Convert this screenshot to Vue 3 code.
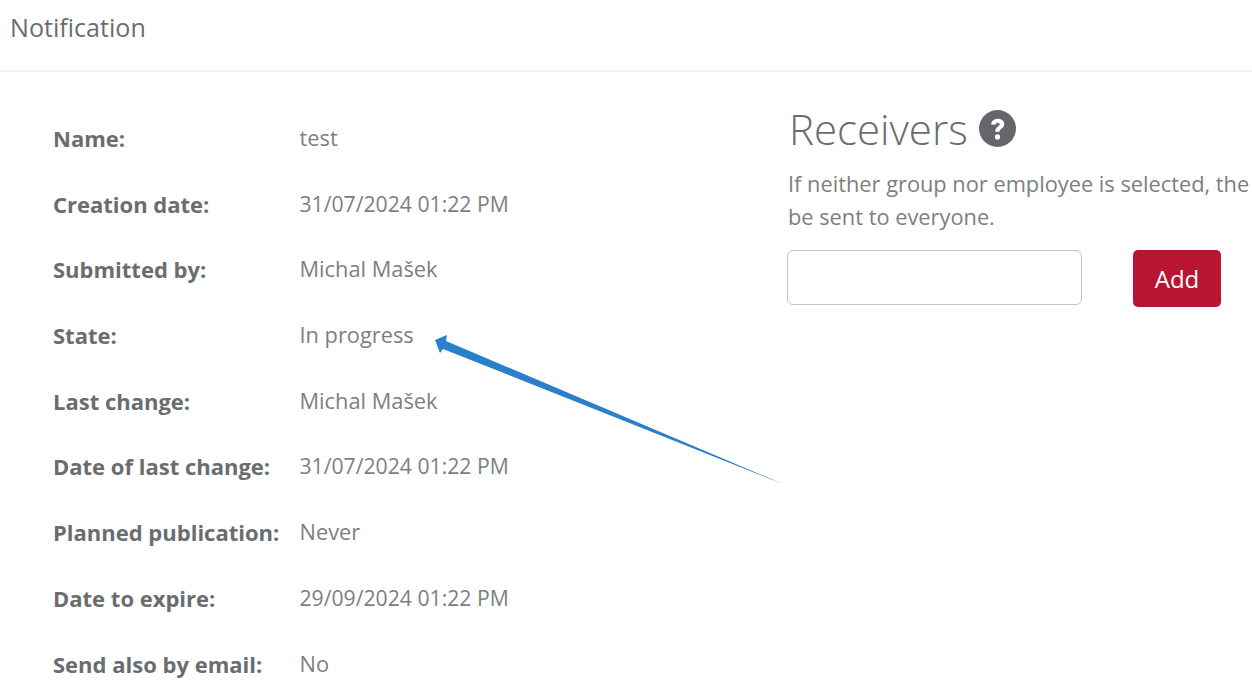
<template>
  <div class="page">
    <header class="page-header">Notification</header>

    <div class="content">
      <dl class="details">
        <div v-for="row in rows" :key="row.label" class="detail-row">
          <dt>{{ row.label }}</dt>
          <dd :class="{ date: row.date }">{{ row.value }}</dd>
        </div>
      </dl>

      <section class="receivers">
        <h2 class="receivers-title">
          Receivers
          <svg class="help-icon" viewBox="0 0 36 36" aria-hidden="true">
            <circle cx="18" cy="18" r="18" fill="#63666a" />
            <path d="M11.800 14.200c.3-3.600 2.900-5.800 6.500-5.800 3.600 0 6.300 2.100 6.300 5.200 0 2.400-1.400 3.600-2.900 4.700-1.200.9-1.700 1.400-1.700 2.900h-4.200c0-2.700 1-3.900 2.600-5.100 1.100-.8 1.700-1.300 1.700-2.200 0-1-.7-1.600-1.900-1.600-1.300 0-2 .7-2.200 2.100z" fill="#fff" />
            <circle cx="18" cy="26.200" r="2.500" fill="#fff" />
          </svg>
        </h2>
        <p class="receivers-note">If neither group nor employee is selected, the<br />be sent to everyone.</p>
        <div class="receivers-form">
          <input class="receivers-input" type="text" />
          <button class="add-button" type="button">Add</button>
        </div>
      </section>
    </div>

    <!-- Annotation drawn over the screenshot -->
    <svg class="arrow" viewBox="0 0 1252 699" aria-hidden="true">
      <path d="M435 340 L447 335 L446 341 L783 484 L443 349 L440 353 Z" fill="#2a7fcb" />
    </svg>
  </div>
</template>

<script setup>
const rows = [
  { label: 'Name:', value: 'test' },
  { label: 'Creation date:', value: '31/07/2024 01:22 PM', date: true },
  { label: 'Submitted by:', value: 'Michal Mašek' },
  { label: 'State:', value: 'In progress' },
  { label: 'Last change:', value: 'Michal Mašek' },
  { label: 'Date of last change:', value: '31/07/2024 01:22 PM', date: true },
  { label: 'Planned publication:', value: 'Never' },
  { label: 'Date to expire:', value: '29/09/2024 01:22 PM', date: true },
  { label: 'Send also by email:', value: 'No' }
]
</script>

<style>
html,
body {
  margin: 0;
  background: #fff;
  overflow: hidden;
}
</style>

<style scoped>
.page {
  position: relative;
  width: 1252px;
  height: 699px;
  overflow: hidden;
  font-family: "Open Sans", "Noto Sans", sans-serif;
  color: #6a6d70;
}

.page-header {
  height: 72px;
  box-sizing: border-box;
  padding: 11px 0 0 10px;
  font-size: 25.100px;
  line-height: 32px;
  border-bottom: 2px solid #f2f2f2;
}

.content {
  display: flex;
  padding-top: 50px;
}

.details {
  width: 787px;
  flex: none;
  margin: 0;
  padding-left: 53px;
  box-sizing: border-box;
}

.detail-row {
  display: flex;
  height: 65.7px;
  font-size: 21.800px;
  line-height: 32px;
}

.detail-row dt {
  width: 246.500px;
  flex: none;
  font-size: 22px;
  font-weight: 700;
}

.detail-row dd {
  margin: 0;
  color: #7c7f82;
}

.detail-row dd.date {
  font-size: 21.200px;
}

.receivers {
  flex: none;
  width: 465px;
  margin-top: 1px;
}

.receivers-title {
  display: flex;
  align-items: center;
  gap: 11px;
  margin: -21px 0 0 2px;
  font-size: 42px;
  line-height: 54px;
  font-weight: 300;
  color: #6a6d70;
}

.help-icon {
  width: 37px;
  height: 37px;
  margin-top: -2px;
}

.receivers-note {
  margin: 11px 0 0 1px;
  font-size: 21.800px;
  line-height: 33px;
  white-space: nowrap;
  color: #7c7f82;
}

.receivers-form {
  display: flex;
  gap: 51px;
  margin-top: 17px;
}

.receivers-input {
  width: 295px;
  height: 55px;
  box-sizing: border-box;
  border: 1px solid #c4c4c4;
  border-radius: 6px;
  background: #fff;
}

.add-button {
  width: 88px;
  height: 57px;
  border: none;
  border-radius: 5px;
  background: #b91432;
  color: #fff;
  font-family: inherit;
  font-size: 24px;
}

.arrow {
  position: absolute;
  top: 0;
  left: 0;
  width: 1252px;
  height: 699px;
  pointer-events: none;
}
</style>
